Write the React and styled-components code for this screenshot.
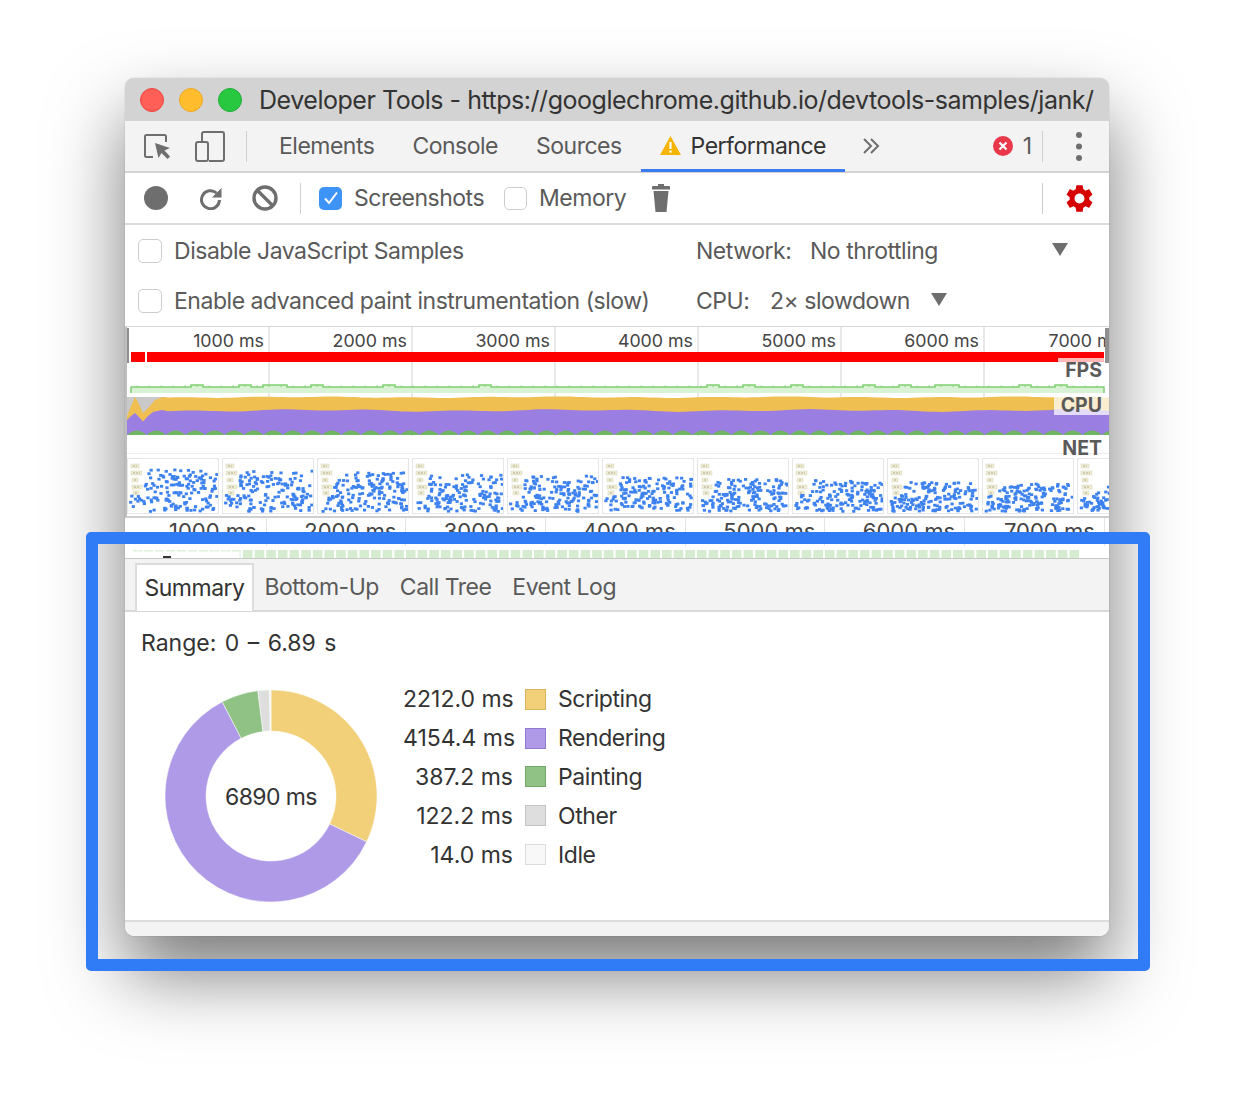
import React from 'react'
import styled, { createGlobalStyle } from 'styled-components'
import { MdSettings } from 'react-icons/md'

const font = '"Inter", "Liberation Sans", sans-serif'
const iconGray = '#6e6e6e'

const GlobalStyle = createGlobalStyle`
    html, body {
        margin: 0;
        padding: 0;
        background: #fff;
        overflow: hidden;
    }
    * {
        box-sizing: border-box;
    }
`

// small seeded random so the chart noise stays the same between runs
const seeded = (seed) => {
    let s = seed
    return () => {
        s = (s * 16807) % 2147483647
        return s / 2147483647
    }
}

const wavePath = (points, bottom) => {
    const line = points.map(([x, y]) => `${x.toFixed(1)} ${y.toFixed(1)}`).join('L')
    return `M${line}L${points[points.length - 1][0]} ${bottom}L${points[0][0]} ${bottom}Z`
}

const waveFrom = (start, base, seed, amp) => {
    const out = [...start]
    for (let x = start[start.length - 1][0] + 6; x <= 984; x += 6) {
        out.push([x, base + Math.sin(x / (11 + seed)) * amp + Math.sin(x / (37 + seed)) * amp])
    }
    return out
}

const yellowTop = waveFrom([[0, 20], [4, 10], [8, 1], [12, 8], [16, 17], [22, 11], [28, 4], [36, 1]], 1.2, 1, 0.4)
const purpleTop = waveFrom([[0, 24], [4, 20], [8, 17], [12, 21], [16, 25.5], [21, 20], [26, 16], [35, 14]], 14.5, 3, 0.7)

const greenBumps = () => {
    let d = 'M0 39'
    for (let x = 0; x < 984; x += 19.5) {
        d += `Q${x + 9.7} 30 ${x + 19.5} 39`
    }
    return d + 'Z'
}

const fpsLine = () => {
    const rnd = seeded(77)
    let d = 'M4 31V25'
    for (let x = 4; x < 977; x += 12) {
        const y = rnd() > 0.78 ? 23 : 25
        d += `V${y}H${Math.min(x + 12, 977)}`
    }
    return d + 'V31'
}

const fpsTicks = () => {
    let d = ''
    for (let x = 10; x < 977; x += 12) {
        d += `M${x} 25v-1.500`
    }
    return d
}

const slices = [
    { value: 2212, color: '#f2d07a' },
    { value: 4154.4, color: '#af9ae8' },
    { value: 387.2, color: '#8fc284' },
    { value: 122.2, color: '#dedede' },
    { value: 14, color: '#f6f6f6' },
]

const slicePath = (from, to) => {
    const c = 106
    const R = 106
    const r = 65
    const pt = (rad, a) => `${c + rad * Math.sin(a)} ${c - rad * Math.cos(a)}`
    const large = to - from > Math.PI ? 1 : 0
    return `M${pt(R, from)}A${R} ${R} 0 ${large} 1 ${pt(R, to)}L${pt(r, to)}A${r} ${r} 0 ${large} 0 ${pt(r, from)}Z`
}

const legend = [
    { value: '2212.0 ms', label: 'Scripting', fill: '#f2d07a', edge: '#d8b45e' },
    { value: '4154.4 ms', label: 'Rendering', fill: '#af9ae8', edge: '#9079cf' },
    { value: '387.2 ms', label: 'Painting', fill: '#8fc284', edge: '#74a869' },
    { value: '122.2 ms', label: 'Other', fill: '#dedede', edge: '#c4c4c4' },
    { value: '14.0 ms', label: 'Idle', fill: '#f8f8f8', edge: '#dcdcdc' },
]

const Frame = ({ index }) => {
    const rnd = seeded(1234 + index * 97)
    const top = 9 + index * 1.6
    const dots = []
    for (let i = 0; i < 165; i++) {
        const y = top + Math.pow(rnd(), 0.9) * (51 - top)
        const x = 1 + rnd() * 87
        if (x < 15 && y < 35) continue
        dots.push(<rect key={i} x={x} y={y} width="3.200" height="2.800" fill="#3d82ee" />)
    }
    const notes = [[3, 5, 8], [3, 12, 11], [4, 19, 6], [4, 26, 10], [5, 32, 6]]
    return (
        <FrameBox>
            <svg width="90" height="54" viewBox="0 0 90 54">
                {notes.map(([x, y, w]) => (
                    <g key={y}>
                        <rect x={x} y={y} width={w} height="4" fill="#f0edd0" stroke="#d8d6c4" strokeWidth="0.500" />
                        <path d={`M${x + 2} ${y + 2}h${w - 4}`} stroke="#9a9a8a" strokeWidth="0.800" strokeDasharray="2 1" />
                    </g>
                ))}
                {dots}
            </svg>
        </FrameBox>
    )
}

export default function App() {
    let angle = 0
    const total = slices.reduce((sum, s) => sum + s.value, 0)

    return (
        <Page>
            <GlobalStyle />
            <Window>
                <TitleBar>
                    <Light $color="#ff5f57" $edge="#e9453f" />
                    <Light $color="#ffbd2e" $edge="#eca928" />
                    <Light $color="#28c840" $edge="#22ae37" />
                    <Title>Developer Tools - https://googlechrome.github.io/devtools-samples/jank/</Title>
                </TitleBar>

                <MainTabs>
                    <InspectIcon width="27" height="26" viewBox="0 0 27 26" fill="none">
                        <path d="M9 23H2.500A1.500 1.500 0 0 1 1 21.500V2.500A1.500 1.500 0 0 1 2.500 1h18A1.500 1.500 0 0 1 22 2.500V8" stroke={iconGray} strokeWidth="2" />
                        <path d="M11 9l15 5-5.500 2.500 5.500 6-2.500 2.500-6-6L14.500 24z" fill={iconGray} />
                    </InspectIcon>
                    <DeviceIcon width="30" height="31" viewBox="0 0 30 31" fill="none">
                        <path d="M7 10V3a2 2 0 0 1 2-2h18a2 2 0 0 1 2 2v25a2 2 0 0 1-2 2H14" stroke={iconGray} strokeWidth="2" />
                        <rect x="1" y="11" width="12" height="19" rx="2" stroke={iconGray} strokeWidth="2" />
                    </DeviceIcon>
                    <Separator />
                    <TabStrip>
                        <MainTab>Elements</MainTab>
                        <MainTab>Console</MainTab>
                        <MainTab>Sources</MainTab>
                        <MainTab $selected>
                            <svg width="21" height="19" viewBox="0 0 21 19">
                                <path d="M10.500 0L21 19H0z" fill="#f4b400" />
                                <rect x="9.400" y="6" width="2.200" height="7" fill="#fff" />
                                <rect x="9.400" y="14.500" width="2.200" height="2.200" fill="#fff" />
                            </svg>
                            Performance
                        </MainTab>
                    </TabStrip>
                    <MoreIcon width="18" height="16" viewBox="0 0 18 16" fill="none">
                        <path d="M2 1l7 7-7 7M9 1l7 7-7 7" stroke={iconGray} strokeWidth="2" />
                    </MoreIcon>
                    <ErrorBadge>
                        <svg width="20" height="20" viewBox="0 0 20 20">
                            <circle cx="10" cy="10" r="10" fill="#e8384a" />
                            <path d="M6.500 6.500l7 7M13.500 6.500l-7 7" stroke="#fff" strokeWidth="2.200" />
                        </svg>
                        1
                    </ErrorBadge>
                    <Separator />
                    <KebabIcon width="6" height="29" viewBox="0 0 6 29" fill={iconGray}>
                        <circle cx="3" cy="3" r="3" />
                        <circle cx="3" cy="14.500" r="3" />
                        <circle cx="3" cy="26" r="3" />
                    </KebabIcon>
                </MainTabs>

                <Toolbar>
                    <RecordDot />
                    <ReloadIcon width="23" height="23" viewBox="0 0 23 23" fill="none">
                        <path d="M17.500 6A9 9 0 1 0 20.500 13" stroke={iconGray} strokeWidth="3" />
                        <path d="M22.500 1v9.500h-9.500z" fill={iconGray} />
                    </ReloadIcon>
                    <ClearIcon width="26" height="26" viewBox="0 0 26 26" fill="none">
                        <circle cx="13" cy="13" r="11" stroke={iconGray} strokeWidth="3.400" />
                        <path d="M5 5l16 16" stroke={iconGray} strokeWidth="3.400" />
                    </ClearIcon>
                    <Separator />
                    <CheckItem $first>
                        <CheckBox $checked $size="23px">
                            <svg width="16" height="14" viewBox="0 0 16 14" fill="none">
                                <path d="M2 7.500l4 4.500 8-10.500" stroke="#fff" strokeWidth="2" />
                            </svg>
                        </CheckBox>
                        Screenshots
                    </CheckItem>
                    <CheckItem>
                        <CheckBox $size="23px" />
                        Memory
                    </CheckItem>
                    <TrashIcon width="18" height="28" viewBox="0 0 18 28" fill={iconGray}>
                        <path d="M6 0h6v2h5a1 1 0 0 1 1 1v2.500H0V3a1 1 0 0 1 1-1h5z" />
                        <path d="M1.500 7h15L14.500 28h-11z" />
                    </TrashIcon>
                    <ToolbarEnd>
                        <Separator />
                        <GearSlot>
                            <MdSettings size={33} color="#d60000" />
                        </GearSlot>
                    </ToolbarEnd>
                </Toolbar>

                <Settings>
                    <SettingsCell>
                        <CheckBox />
                        Disable JavaScript Samples
                    </SettingsCell>
                    <SettingsCell $plain>
                        <SelectName>Network:</SelectName>
                        <SelectValue $wide>No throttling</SelectValue>
                        <Caret $far />
                    </SettingsCell>
                    <SettingsCell>
                        <CheckBox />
                        Enable advanced paint instrumentation (slow)
                    </SettingsCell>
                    <SettingsCell $plain>
                        <SelectName $short>CPU:</SelectName>
                        <SelectValue>2× slowdown</SelectValue>
                        <Caret />
                    </SettingsCell>
                </Settings>

                <Overview>
                    <GridLines>
                        {[0, 1, 2, 3, 4, 5].map(i => <GridCell key={i} />)}
                    </GridLines>
                    <Ruler>
                        {[1000, 2000, 3000, 4000, 5000, 6000, 7000].map(t => (
                            <RulerCell key={t}>{t} ms</RulerCell>
                        ))}
                    </Ruler>
                    <RedBar>
                        <RedChunk $width="14px" />
                        <RedChunk $grow />
                    </RedBar>
                    <ChartRow $height="34px">
                        <svg width="982" height="34" viewBox="0 0 982 34">
                            <path d={fpsLine()} fill="#d9f1d5" stroke="#7fd072" strokeWidth="1.500" />
                            <path d={fpsTicks()} stroke="#7fd072" strokeWidth="1" />
                        </svg>
                    </ChartRow>
                    <ChartRow $height="40px">
                        <svg width="982" height="40" viewBox="0 0 982 40">
                            <path d="M0 1H38V24H0z" fill="#c9c9c9" />
                            <path d={wavePath(yellowTop, 39)} fill="#efbf52" />
                            <path d={wavePath(purpleTop, 39)} fill="#9a7ee2" />
                            <path d={greenBumps()} fill="#6fb562" />
                        </svg>
                    </ChartRow>
                    <NetRow />
                    <Frames>
                        {Array.from({ length: 11 }, (_, i) => <Frame key={i} index={i} />)}
                    </Frames>
                    <TrackLabel $top="31px" $height="24px">FPS</TrackLabel>
                    <TrackLabel $top="69px" $height="19px">CPU</TrackLabel>
                    <TrackLabel $top="111px" $height="21px" $bare>NET</TrackLabel>
                    <Handle $side="left" />
                    <Handle $side="right" />
                </Overview>

                <DetailRuler>
                    {[1000, 2000, 3000, 4000, 5000, 6000, 7000].map(t => (
                        <DetailCell key={t}>{t} ms</DetailCell>
                    ))}
                </DetailRuler>
                <FrameBand>
                    <svg width="982" height="12" viewBox="0 0 982 12">
                        {Array.from({ length: 10 }, (_, i) => (
                            <rect key={i} x={6 + i * 11} y="4" width="9" height="1.500" fill="#dff1db" />
                        ))}
                        <path d="M113 4.500V12" stroke="#dff1db" />
                        {Array.from({ length: 72 }, (_, i) => (
                            <rect key={i} x={116 + i * 11.640} y="4" width="9.600" height="8" fill="#d5ecd0" />
                        ))}
                        <rect x="36" y="10" width="8" height="2" fill="#333" />
                    </svg>
                </FrameBand>

                <DetailTabs>
                    <DetailTab $selected>Summary</DetailTab>
                    <DetailTab>Bottom-Up</DetailTab>
                    <DetailTab>Call Tree</DetailTab>
                    <DetailTab>Event Log</DetailTab>
                </DetailTabs>

                <Summary>
                    <Range>Range: 0 – 6.89 s</Range>
                    <SummaryBody>
                        <Donut>
                            <svg width="212" height="212" viewBox="0 0 212 212">
                                {slices.map(s => {
                                    const from = angle
                                    angle += (s.value / total) * Math.PI * 2
                                    return <path key={s.color} d={slicePath(from, angle)} fill={s.color} stroke="#fff" strokeWidth="0.500" />
                                })}
                            </svg>
                            <DonutLabel>6890 ms</DonutLabel>
                        </Donut>
                        <Legend>
                            {legend.map(row => (
                                <React.Fragment key={row.label}>
                                    <LegendValue>{row.value}</LegendValue>
                                    <Swatch $fill={row.fill} $edge={row.edge} />
                                    <LegendLabel>{row.label}</LegendLabel>
                                </React.Fragment>
                            ))}
                        </Legend>
                    </SummaryBody>
                </Summary>
                <Footer />
            </Window>
            <Highlight />
        </Page>
    )
}

const Page = styled.div`
    position: relative;
    width: 1238px;
    height: 1108px;
    padding: 78px 0 0 125px;
    font-family: ${font};
    overflow: hidden;
`

const Window = styled.div`
    width: 984px;
    height: 858px;
    border-radius: 9px;
    overflow: hidden;
    background: #fff;
    box-shadow: 0 38px 75px rgba(0, 0, 0, 0.52), 0 0 1px rgba(0, 0, 0, 0.4);
`

const TitleBar = styled.div`
    height: 43px;
    background: #d3d3d3;
    display: flex;
    align-items: center;
    padding-left: 15px;
`

const Light = styled.span`
    flex: none;
    width: 24px;
    height: 24px;
    border-radius: 50%;
    background: ${p => p.$color};
    border: 1px solid ${p => p.$edge};
    margin-right: 15px;
`

const Title = styled.div`
    margin-left: 2px;
    font-size: 25px;
    letter-spacing: -0.47px;
    color: #333;
    white-space: nowrap;
`

const MainTabs = styled.div`
    height: 52px;
    background: #f3f3f3;
    border-bottom: 2px solid #d4d4d4;
    display: flex;
    align-items: center;
    padding-left: 19px;
`

const InspectIcon = styled.svg`
    margin-top: 2px;
`

const DeviceIcon = styled.svg`
    margin: 0 21px 0 24px;
`

const Separator = styled.div`
    width: 1px;
    height: 31px;
    background: #cfcfcf;
    flex: none;
`

const TabStrip = styled.div`
    display: flex;
    margin-left: 13px;
`

const MainTab = styled.div`
    height: 52px;
    padding: 2px 19px 0;
    display: flex;
    align-items: center;
    gap: 10px;
    font-size: 23px;
    letter-spacing: -0.5px;
    color: ${p => (p.$selected ? '#333' : '#5a5a5a')};
    border-bottom: 3px solid ${p => (p.$selected ? '#3a7cf0' : 'transparent')};
    white-space: nowrap;
`

const MoreIcon = styled.svg`
    margin-left: 17px;
`

const ErrorBadge = styled.div`
    margin-left: auto;
    margin-right: 10px;
    display: flex;
    align-items: center;
    gap: 10px;
    font-size: 23px;
    color: #5a5a5a;
`

const KebabIcon = styled.svg`
    margin: 0 27px 0 33px;
`

const Toolbar = styled.div`
    height: 52px;
    background: #fff;
    border-bottom: 2px solid #dcdcdc;
    display: flex;
    align-items: center;
    padding-left: 19px;
`

const RecordDot = styled.div`
    width: 24px;
    height: 24px;
    border-radius: 50%;
    background: ${iconGray};
    margin-right: 31px;
`

const ReloadIcon = styled.svg`
    margin-right: 30px;
`

const ClearIcon = styled.svg`
    margin-right: 22px;
`

const CheckItem = styled.label`
    display: flex;
    align-items: center;
    gap: 12px;
    font-size: 23px;
    letter-spacing: -0.5px;
    color: #5a5a5a;
    margin-left: ${p => (p.$first ? '18px' : '20px')};
`

const CheckBox = styled.span`
    width: ${p => p.$size || '24px'};
    height: ${p => p.$size || '24px'};
    flex: none;
    border-radius: 5px;
    display: flex;
    align-items: center;
    justify-content: center;
    background: ${p => (p.$checked ? '#3d94f6' : '#fff')};
    border: ${p => (p.$checked ? 'none' : '1.5px solid #cdcdcd')};
`

const TrashIcon = styled.svg`
    margin-left: 26px;
`

const ToolbarEnd = styled.div`
    margin-left: auto;
    display: flex;
    align-items: center;
`

const GearSlot = styled.div`
    display: flex;
    margin: 0 13px 0 20px;
`

const Settings = styled.div`
    height: 102px;
    display: grid;
    grid-template-columns: 571px 1fr;
    grid-template-rows: 51px 50px;
    align-items: center;
    border-bottom: 1px solid #d8d8d8;
`

const SettingsCell = styled.div`
    display: flex;
    align-items: center;
    gap: 12px;
    padding-left: ${p => (p.$plain ? '0' : '13px')};
    font-size: 23px;
    letter-spacing: -0.47px;
    color: #5a5a5a;
    white-space: nowrap;
`

const SelectName = styled.span`
    width: ${p => (p.$short ? '62px' : '102px')};
`

const SelectValue = styled.span`
    width: ${p => (p.$wide ? '230px' : 'auto')};
`

const Caret = styled.span`
    width: 0;
    height: 0;
    margin: -3px 0 0 ${p => (p.$far ? '0' : '9px')};
    border-left: 8px solid transparent;
    border-right: 8px solid transparent;
    border-top: 13px solid ${iconGray};
`

const Overview = styled.div`
    position: relative;
    height: 191px;
    border-left: 2px solid #bdbdbd;
    border-bottom: 2px solid #cfcfcf;
    overflow: hidden;
`

const GridLines = styled.div`
    position: absolute;
    top: 0;
    left: 0;
    height: 128px;
    display: flex;
`

const GridCell = styled.div`
    flex: none;
    width: 143px;
    border-right: 2px solid #e8e8e8;
`

const Ruler = styled.div`
    position: relative;
    height: 25px;
    width: 978px;
    display: flex;
    overflow: hidden;
`

const RulerCell = styled.div`
    flex: none;
    width: 143px;
    padding-right: 6px;
    text-align: right;
    font-size: 17.800px;
    line-height: 28px;
    color: #444;
    white-space: nowrap;
`

const RedBar = styled.div`
    position: relative;
    height: 10px;
    margin: 0 5px 0 4px;
    display: flex;
    gap: 2px;
`

const RedChunk = styled.div`
    background: #ff0000;
    width: ${p => p.$width || 'auto'};
    flex: ${p => (p.$grow ? '1' : 'none')};
`

const ChartRow = styled.div`
    position: relative;
    height: ${p => p.$height};
    display: flex;
`

const NetRow = styled.div`
    position: relative;
    height: 22px;
    background: linear-gradient(#fff 17px, #ececec 17px, #ececec 18px, #fff 18px);
`

const Frames = styled.div`
    position: relative;
    display: flex;
    gap: 3px;
    height: 56px;
    width: 982px;
    overflow: hidden;
`

const FrameBox = styled.div`
    flex: none;
    width: 92px;
    height: 56px;
    border: 1px solid #e6e6e6;
`

const TrackLabel = styled.div`
    position: absolute;
    right: 0;
    top: ${p => p.$top};
    height: ${p => p.$height};
    padding: 0 7px;
    background: ${p => (p.$bare ? 'transparent' : 'rgba(255, 255, 255, 0.72)')};
    font-size: 19.500px;
    line-height: ${p => p.$height};
    font-weight: 700;
    color: #5a5a5a;
`

const Handle = styled.div`
    position: absolute;
    top: 1px;
    ${p => p.$side}: ${p => (p.$side === 'left' ? '-2px' : '0')};
    width: 4px;
    height: 35px;
    background: #8f8f8f;
`

const DetailRuler = styled.div`
    height: 28px;
    padding-left: 2px;
    display: flex;
    overflow: hidden;
`

const DetailCell = styled.div`
    flex: none;
    width: 139.700px;
    padding-right: 9px;
    text-align: right;
    font-size: 22px;
    line-height: 27px;
    color: #444;
    white-space: nowrap;
    border-right: 1px solid #e4e4e4;
`

const FrameBand = styled.div`
    height: 13px;
    padding-left: 2px;
    border-bottom: 1px solid #c8c8c8;
    display: flex;
`

const DetailTabs = styled.div`
    height: 53px;
    background: #f3f3f3;
    border-bottom: 2px solid #d8d8d8;
    display: flex;
    align-items: flex-end;
    padding-left: 10px;
`

const DetailTab = styled.div`
    height: ${p => (p.$selected ? '48px' : '46px')};
    padding: 0 ${p => (p.$selected ? '7.500px' : '10.500px')};
    display: flex;
    align-items: center;
    margin-bottom: ${p => (p.$selected ? '-1px' : '0')};
    font-size: 23px;
    letter-spacing: -0.5px;
    color: ${p => (p.$selected ? '#333' : '#5a5a5a')};
    background: ${p => (p.$selected ? '#fff' : 'transparent')};
    border: ${p => (p.$selected ? '2px solid #dcdcdc' : 'none')};
    border-bottom: none;
    white-space: nowrap;
`

const Summary = styled.div`
    height: 310px;
    padding: 16px 0 0 16px;
    border-bottom: 2px solid #dcdcdc;
    color: #333;
`

const Range = styled.div`
    font-size: 23px;
    line-height: 30px;
    word-spacing: 2px;
`

const SummaryBody = styled.div`
    margin-top: 32px;
    padding-left: 24px;
    display: flex;
    gap: 26px;
`

const Donut = styled.div`
    position: relative;
    width: 212px;
    height: 212px;
    flex: none;
`

const DonutLabel = styled.div`
    position: absolute;
    inset: 1px 0 0;
    display: flex;
    align-items: center;
    justify-content: center;
    font-size: 23px;
    letter-spacing: -0.6px;
`

const Legend = styled.div`
    margin-top: -10px;
    display: grid;
    grid-template-columns: 110px 21px auto;
    grid-auto-rows: 38.800px;
    column-gap: 12px;
    align-items: center;
    align-content: start;
    font-size: 23px;
`

const LegendValue = styled.div`
    text-align: right;
    white-space: nowrap;
`

const Swatch = styled.div`
    width: 21px;
    height: 21px;
    background: ${p => p.$fill};
    border: 1.500px solid ${p => p.$edge};
`

const LegendLabel = styled.div`
    white-space: nowrap;
    letter-spacing: -0.42px;
`

const Footer = styled.div`
    height: 14px;
    background: #f3f3f3;
`

const Highlight = styled.div`
    position: absolute;
    left: 86px;
    top: 532px;
    width: 1064px;
    height: 439px;
    border: 12px solid #2f7cf6;
    border-radius: 5px;
    pointer-events: none;
`
